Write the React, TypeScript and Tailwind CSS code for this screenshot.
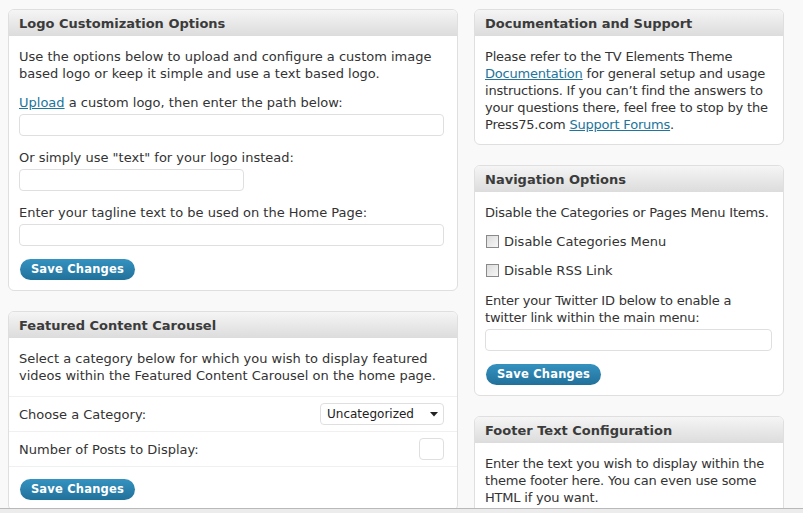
import React from 'react';

// Shared bits for the theme options screen
const font = { fontFamily: '"DejaVu Sans", Verdana, sans-serif' };

const Panel: React.FC<{ title: string; children: React.ReactNode }> = ({ title, children }) => (
  <div className="rounded-[6px] border border-[#dfdfdf] bg-white overflow-hidden">
    <div className="h-[26px] flex items-center px-[10px] bg-gradient-to-b from-[#f5f5f5] to-[#dcdcdc] text-[13px] font-bold text-[#3b3b3b]">
      {title}
    </div>
    {children}
  </div>
);

const TextInput: React.FC<{ className?: string }> = ({ className = 'w-full' }) => (
  <div className={`h-[22px] mt-[3px] rounded-[4px] border border-[#dfdfdf] bg-white ${className}`} />
);

const SaveButton: React.FC = () => (
  <button className="ml-[1px] h-[21px] w-[115px] rounded-full bg-gradient-to-b from-[#3592c0] to-[#21719a] text-white text-[11.5px] font-bold tracking-[0.2px] leading-none">
    Save Changes
  </button>
);

const Checkbox: React.FC<{ label: string }> = ({ label }) => (
  <div className="flex items-center h-[29px]">
    <span className="w-[13px] h-[13px] border border-[#8a8a8a] bg-gradient-to-br from-[#dcdcdc] to-[#f7f7f7] mr-[5px] ml-[1px]" />
    <span>{label}</span>
  </div>
);

const Link: React.FC<{ children: React.ReactNode }> = ({ children }) => (
  <span className="text-[#21759b] underline">{children}</span>
);

const App: React.FC = () => {
  return (
    <div className="w-[803px] h-[513px] bg-[#ececec] overflow-hidden" style={font}>
      <div className="h-[509px] bg-[#f9f9f9] border-b border-[#b9b9b9] overflow-hidden">
        <div className="flex gap-[16px] pl-[8px] pt-[9px] text-[13px] leading-[17px] text-[#333]">
          {/* left column */}
          <div className="w-[450px] flex flex-col gap-[20px]">
            <Panel title="Logo Customization Options">
              <div className="pl-[10px] pr-[13px] pt-[12px] pb-[10px] flex flex-col">
                <p className="whitespace-nowrap">
                  Use the options below to upload and configure a custom image
                  <br />
                  based logo or keep it simple and use a text based logo.
                </p>
                <div className="mt-[12px]">
                  <Link>Upload</Link> a custom logo, then enter the path below:
                </div>
                <TextInput />
                <div className="mt-[13px]">Or simply use "text" for your logo instead:</div>
                <TextInput className="w-[225px]" />
                <div className="mt-[13px]">Enter your tagline text to be used on the Home Page:</div>
                <TextInput />
                <div className="mt-[13px]">
                  <SaveButton />
                </div>
              </div>
            </Panel>

            <Panel title="Featured Content Carousel">
              <p className="px-[10px] pt-[12px] pb-[12px] border-b border-[#f0f0f0] whitespace-nowrap">
                Select a category below for which you wish to display featured
                <br />
                videos within the Featured Content Carousel on the home page.
              </p>
              <div className="h-[35px] pl-[10px] pr-[13px] flex items-center justify-between border-b border-[#f0f0f0]">
                <span>Choose a Category:</span>
                <div className="w-[124px] h-[22px] rounded-[4px] border border-[#dfdfdf] flex items-center justify-between pl-[6px] pr-[5px] text-[12px] text-[#222]">
                  <span>Uncategorized</span>
                  <svg width="8" height="5" viewBox="0 0 8 5"><path d="M0 0h8L4 4.5z" fill="#222" /></svg>
                </div>
              </div>
              <div className="h-[35px] pl-[10px] pr-[13px] flex items-center justify-between border-b border-[#f0f0f0]">
                <span>Number of Posts to Display:</span>
                <div className="w-[25px] h-[22px] rounded-[4px] border border-[#dfdfdf]" />
              </div>
              <div className="px-[10px] pt-[12px] pb-[10px]">
                <SaveButton />
              </div>
            </Panel>
          </div>

          {/* right column */}
          <div className="w-[310px] flex flex-col gap-[20px]">
            <Panel title="Documentation and Support">
              <p className="pl-[10px] pt-[12px] pb-[11px] whitespace-nowrap tracking-[-0.2px]">
                Please refer to the TV Elements Theme
                <br />
                <Link>Documentation</Link> for general setup and usage
                <br />
                instructions. If you can’t find the answers to
                <br />
                your questions there, feel free to stop by the
                <br />
                Press75.com <Link>Support Forums</Link>.
              </p>
            </Panel>

            <Panel title="Navigation Options">
              <div className="pl-[10px] pr-[11px] pt-[12px] pb-[10px] flex flex-col">
                <p className="whitespace-nowrap tracking-[-0.2px]">Disable the Categories or Pages Menu Items.</p>
                <div className="mt-[6px]">
                  <Checkbox label="Disable Categories Menu" />
                  <Checkbox label="Disable RSS Link" />
                </div>
                <p className="mt-[7px] whitespace-nowrap tracking-[-0.2px]">
                  Enter your Twitter ID below to enable a
                  <br />
                  twitter link within the main menu:
                </p>
                <TextInput />
                <div className="mt-[13px]">
                  <SaveButton />
                </div>
              </div>
            </Panel>

            <Panel title="Footer Text Configuration">
              <p className="pl-[10px] pt-[12px] pb-[11px] whitespace-nowrap tracking-[-0.2px]">
                Enter the text you wish to display within the
                <br />
                theme footer here. You can even use some
                <br />
                HTML if you want.
              </p>
            </Panel>
          </div>
        </div>
      </div>
    </div>
  );
};

export default App;
